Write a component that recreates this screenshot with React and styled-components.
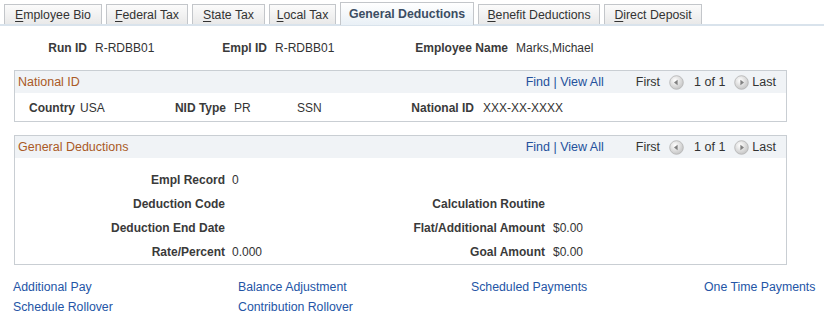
import React from "react";
import styled, { createGlobalStyle } from "styled-components";

const GlobalStyle = createGlobalStyle`
  body {
    margin: 0;
    background: #fff;
    font-family: Arial, "Liberation Sans", sans-serif;
    font-size: 12px;
    color: #333;
  }
`;

const tabs = [
  { label: "Employee Bio", key: "E", width: 98 },
  { label: "Federal Tax", key: "F", width: 82 },
  { label: "State Tax", key: "S", width: 73 },
  { label: "Local Tax", key: "L", width: 67 },
  { label: "General Deductions", active: true, width: 134 },
  { label: "Benefit Deductions", key: "B", width: 122 },
  { label: "Direct Deposit", key: "D", width: 98 },
];

const links = [
  ["Additional Pay", "Balance Adjustment", "Scheduled Payments", "One Time Payments"],
  ["Schedule Rollover", "Contribution Rollover"],
];

const NavIcon = ({ dir }) => (
  <svg width="15" height="15" viewBox="0 0 15 15">
    <defs>
      <radialGradient id={`g-${dir}`} cx="40%" cy="35%" r="70%">
        <stop offset="0%" stopColor="#ffffff" />
        <stop offset="100%" stopColor="#c2c2c2" />
      </radialGradient>
    </defs>
    <circle cx="7.5" cy="7.5" r="6.8" fill={`url(#g-${dir})`} stroke="#b3b3b3" strokeWidth="0.8" />
    {dir === "left" ? (
      <path d="M5 7.5 L8.6 4.8 L8.6 10.2 Z" fill="#808080" />
    ) : (
      <path d="M10 7.5 L6.4 4.8 L6.4 10.2 Z" fill="#808080" />
    )}
  </svg>
);

const TabLabel = ({ label, hotkey }) => {
  if (!hotkey) return label;
  return (
    <>
      <u>{label[0]}</u>
      {label.slice(1)}
    </>
  );
};

const Field = ({ label, value, labelWidth, width, gap = 8, children }) => (
  <FieldWrap $width={width} $gap={gap}>
    <Label $width={labelWidth}>{label}</Label>
    {value !== undefined && <Value>{value}</Value>}
    {children}
  </FieldWrap>
);

const PanelHeader = ({ title }) => (
  <Header>
    <Title>{title}</Title>
    <Nav>
      <NavLinks>Find | View All</NavLinks>
      <span>First</span>
      <NavIcon dir="left" />
      <Counter>1 of 1</Counter>
      <NavIcon dir="right" />
      <Last>Last</Last>
    </Nav>
  </Header>
);

const App = () => (
  <>
    <GlobalStyle />
    <Page>
      <TabBar>
        {tabs.map((t) => (
          <Tab key={t.label} $active={t.active} $width={t.width}>
            <TabLabel label={t.label} hotkey={t.key} />
          </Tab>
        ))}
      </TabBar>

      <TopRow>
        <Field label="Run ID" value="R-RDBB01" labelWidth={87} width={180} />
        <Field label="Empl ID" value="R-RDBB01" labelWidth={87} width={180} />
        <Field label="Employee Name" value="Marks,Michael" labelWidth={148} />
      </TopRow>

      <Panel>
        <PanelHeader title="National ID" />
        <NidRow>
          <Field label="Country" value="USA" labelWidth={60} width={115} gap={5} />
          <Field label="NID Type" labelWidth={96} width={230}>
            <Value $width={55}>PR</Value>
            <Value>SSN</Value>
          </Field>
          <Field label="National ID" value="XXX-XX-XXXX" labelWidth={114} gap={9} />
        </NidRow>
      </Panel>

      <Panel>
        <PanelHeader title="General Deductions" />
        <DeductionGrid>
          <GridLabel>Empl Record</GridLabel>
          <GridValue>0</GridValue>
          <GridLabel />
          <GridValue $right />

          <GridLabel>Deduction Code</GridLabel>
          <GridValue />
          <GridLabel>Calculation Routine</GridLabel>
          <GridValue $right />

          <GridLabel>Deduction End Date</GridLabel>
          <GridValue />
          <GridLabel>Flat/Additional Amount</GridLabel>
          <GridValue $right>$0.00</GridValue>

          <GridLabel>Rate/Percent</GridLabel>
          <GridValue>0.000</GridValue>
          <GridLabel>Goal Amount</GridLabel>
          <GridValue $right>$0.00</GridValue>
        </DeductionGrid>
      </Panel>

      <LinkGrid>
        {links.flat().map((l) => (
          <PageLink key={l} href="#">
            {l}
          </PageLink>
        ))}
      </LinkGrid>
    </Page>
  </>
);

const Page = styled.div`
  width: 824px;
  padding-top: 4px;
`;

const TabBar = styled.div`
  display: flex;
  align-items: flex-end;
  gap: 4px;
  padding-left: 4px;
  height: 20px;
  border-bottom: 2px solid #d9e3ec;
`;

const Tab = styled.div`
  box-sizing: border-box;
  width: ${(p) => p.$width}px;
  height: ${(p) => (p.$active ? "23px" : "20px")};
  margin-bottom: ${(p) => (p.$active ? "-1px" : "0")};
  display: flex;
  align-items: center;
  justify-content: center;
  border: 1px solid #c3c6ca;
  border-bottom: none;
  background: ${(p) =>
    p.$active
      ? "linear-gradient(#ffffff, #e9f0f6)"
      : "linear-gradient(#fbfbfb, #e9e9e9)"};
  color: ${(p) => (p.$active ? "#3c4d63" : "#333")};
  font-weight: ${(p) => (p.$active ? "bold" : "normal")};
  font-size: 12.3px;
  white-space: nowrap;

  u {
    text-decoration-thickness: 1px;
    text-underline-offset: 2px;
  }
`;

const TopRow = styled.div`
  display: flex;
  height: 24px;
  align-items: center;
  margin-top: 10px;
  margin-bottom: 10px;
`;

const FieldWrap = styled.div`
  display: flex;
  align-items: center;
  gap: ${(p) => p.$gap}px;
  width: ${(p) => (p.$width ? `${p.$width}px` : "auto")};
  flex-shrink: 0;
  white-space: nowrap;
`;

const Label = styled.span`
  width: ${(p) => p.$width}px;
  text-align: right;
  font-weight: bold;
  color: #3a3a3a;
  flex-shrink: 0;
`;

const Value = styled.span`
  color: #333;
  width: ${(p) => (p.$width ? `${p.$width}px` : "auto")};
  flex-shrink: 0;
`;

const Panel = styled.div`
  margin: 0 37px 13px 14px;
  border: 1px solid #c9ced3;
`;

const Header = styled.div`
  display: flex;
  justify-content: space-between;
  align-items: center;
  height: 22px;
  background: #f0f3f6;
  padding: 0 10px 0 3px;
`;

const Title = styled.span`
  color: #aa5a26;
  font-size: 12.5px;
`;

const Nav = styled.div`
  display: flex;
  align-items: center;
  gap: 9px;
  color: #333;
  font-size: 12.5px;
`;

const NavLinks = styled.span`
  color: #24519c;
  margin-right: 23px;
`;

const Counter = styled.span`
  margin: 0 0 0 1px;
`;

const Last = styled.span`
  margin-left: -6px;
`;

const NidRow = styled.div`
  display: flex;
  align-items: center;
  height: 24px;
  padding: 3px 0 1px;
`;

const DeductionGrid = styled.div`
  display: grid;
  grid-template-columns: 210px 110px 210px 1fr;
  grid-auto-rows: 24px;
  align-items: center;
  padding-top: 10px;
`;

const GridLabel = styled.span`
  text-align: right;
  font-weight: bold;
  color: #3a3a3a;
  white-space: nowrap;
`;

const GridValue = styled.span`
  padding-left: ${(p) => (p.$right ? "8px" : "7px")};
  color: #333;
`;

const LinkGrid = styled.div`
  display: grid;
  grid-template-columns: 225px 233px 233px auto;
  grid-auto-rows: 20px;
  align-items: center;
  padding-left: 13px;
  margin-top: -1px;
  font-size: 12.3px;
`;

const PageLink = styled.a`
  color: #2455a6;
  text-decoration: none;
  white-space: nowrap;
`;

export default App;
